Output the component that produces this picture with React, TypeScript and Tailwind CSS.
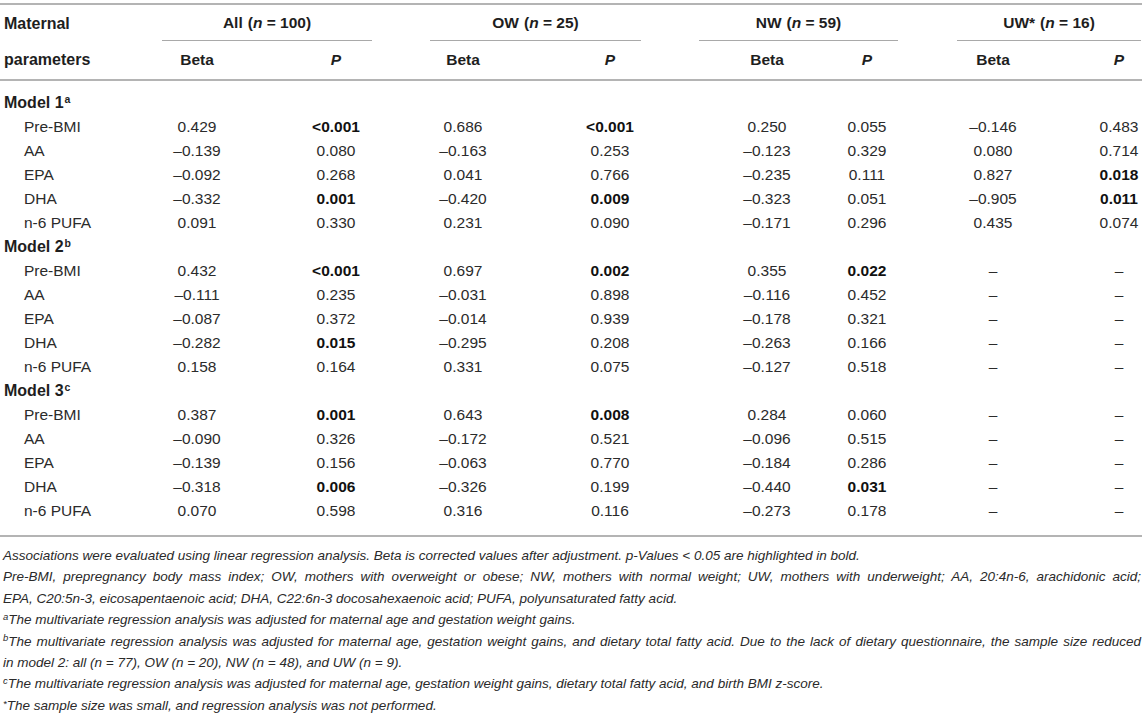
import React from "react";

type Cell = string | { v: string; b: true };
type Row = { label: string; cells: Cell[] } | { model: string; sup: string };

const B = (v: string): Cell => ({ v, b: true });
const D = "–";

const rows: Row[] = [
  { model: "Model 1", sup: "a" },
  { label: "Pre-BMI", cells: ["0.429", B("<0.001"), "0.686", B("<0.001"), "0.250", "0.055", "–0.146", "0.483"] },
  { label: "AA", cells: ["–0.139", "0.080", "–0.163", "0.253", "–0.123", "0.329", "0.080", "0.714"] },
  { label: "EPA", cells: ["–0.092", "0.268", "0.041", "0.766", "–0.235", "0.111", "0.827", B("0.018")] },
  { label: "DHA", cells: ["–0.332", B("0.001"), "–0.420", B("0.009"), "–0.323", "0.051", "–0.905", B("0.011")] },
  { label: "n-6 PUFA", cells: ["0.091", "0.330", "0.231", "0.090", "–0.171", "0.296", "0.435", "0.074"] },
  { model: "Model 2", sup: "b" },
  { label: "Pre-BMI", cells: ["0.432", B("<0.001"), "0.697", B("0.002"), "0.355", B("0.022"), D, D] },
  { label: "AA", cells: ["–0.111", "0.235", "–0.031", "0.898", "–0.116", "0.452", D, D] },
  { label: "EPA", cells: ["–0.087", "0.372", "–0.014", "0.939", "–0.178", "0.321", D, D] },
  { label: "DHA", cells: ["–0.282", B("0.015"), "–0.295", "0.208", "–0.263", "0.166", D, D] },
  { label: "n-6 PUFA", cells: ["0.158", "0.164", "0.331", "0.075", "–0.127", "0.518", D, D] },
  { model: "Model 3", sup: "c" },
  { label: "Pre-BMI", cells: ["0.387", B("0.001"), "0.643", B("0.008"), "0.284", "0.060", D, D] },
  { label: "AA", cells: ["–0.090", "0.326", "–0.172", "0.521", "–0.096", "0.515", D, D] },
  { label: "EPA", cells: ["–0.139", "0.156", "–0.063", "0.770", "–0.184", "0.286", D, D] },
  { label: "DHA", cells: ["–0.318", B("0.006"), "–0.326", "0.199", "–0.440", B("0.031"), D, D] },
  { label: "n-6 PUFA", cells: ["0.070", "0.598", "0.316", "0.116", "–0.273", "0.178", D, D] },
];

const grid =
  "grid grid-cols-[130px_134px_144px_110px_184px_130px_70px_192px_50px] items-center";

// per data column extra classes (UW Beta shifted left a little)
const colCls = ["", "", "", "", "", "", "pr-[10px]", ""];

const groups = [
  { name: "All", n: "100", star: false, cls: "ml-[162px] w-[210px]" },
  { name: "OW", n: "25", star: false, cls: "ml-[58px] w-[211px]" },
  { name: "NW", n: "59", star: false, cls: "ml-[58px] w-[199px]" },
  { name: "UW", n: "16", star: true, cls: "ml-[59px] w-[184px]" },
];

const sup = "text-[9.5px] -top-[0.45em]";

export default function App() {
  return (
    <div
      className="w-[1144px] h-[717px] overflow-hidden bg-white text-[#1e1e1e]"
      style={{ fontFamily: '"Liberation Sans", Arial, Helvetica, sans-serif' }}
    >
      <div className="h-[2px] mt-[3px] mr-[2px] bg-[#b4b4b4]" />
      {/* header row 1 */}
      <div className="flex h-[36px] text-[15.5px] font-bold">
        <div className="w-0 relative">
          <span className="absolute left-[4px] top-[7px] whitespace-nowrap text-[16px]">Maternal</span>
        </div>
        {groups.map((g) => (
          <div key={g.name} className={`${g.cls} flex flex-col`}>
            <div className="flex-1 flex items-center justify-center whitespace-nowrap">
              {g.name}
              {g.star ? <span>*</span> : null}
              <span className="ml-[5px]">
                (<i>n</i> = {g.n})
              </span>
            </div>
            <div className="h-[1.5px] bg-[#a9a9a9]" />
          </div>
        ))}
      </div>
      {/* header row 2 */}
      <div className={`${grid} h-[38px] text-[15.5px] font-bold`}>
        <div className="pl-[4px] text-[16px]">parameters</div>
        {["All", "OW", "NW", "UW"].map((k, gi) => (
          <React.Fragment key={k}>
            <div className={`text-center ${colCls[gi * 2]}`}>Beta</div>
            <div className={`text-center italic ${colCls[gi * 2 + 1]}`}>P</div>
          </React.Fragment>
        ))}
      </div>
      <div className="h-[2px] mr-[2px] bg-[#b4b4b4]" />
      {/* body */}
      <div className="pt-[10px] pb-[12px] text-[15.5px]">
        {rows.map((r, i) =>
          "model" in r ? (
            <div key={i} className="h-[24px] flex items-center pl-[4px] font-bold text-[16px]">
              {r.model}
              <sup className="text-[10.5px] font-semibold ml-[1px] -top-[0.4em]">{r.sup}</sup>
            </div>
          ) : (
            <div key={i} className={`${grid} h-[24px] text-[#2b2b2b]`}>
              <div className="pl-[24px] whitespace-nowrap">{r.label}</div>
              {r.cells.map((c, j) =>
                typeof c === "string" ? (
                  <div key={j} className={`text-center whitespace-nowrap ${colCls[j]}`}>
                    {c}
                  </div>
                ) : (
                  <div key={j} className={`text-center font-bold text-[#111] whitespace-nowrap ${colCls[j]}`}>
                    {c.v}
                  </div>
                )
              )}
            </div>
          )
        )}
      </div>
      <div className="h-[2px] mr-[2px] bg-[#b4b4b4]" />
      {/* footnotes */}
      <div className="pt-[8px] pl-[3px] pr-[3px] text-[13.5px] leading-[21.4px] italic text-[#2a2a2a]">
        <div className="whitespace-nowrap">
          Associations were evaluated using linear regression analysis. Beta is corrected values after
          adjustment. p-Values &lt; 0.05 are highlighted in bold.
        </div>
        <div className="whitespace-nowrap text-justify [text-align-last:justify]">
          Pre-BMI, prepregnancy body mass index; OW, mothers with overweight or obese; NW, mothers with
          normal weight; UW, mothers with underweight; AA, 20:4n-6, arachidonic acid;
        </div>
        <div className="whitespace-nowrap">
          EPA, C20:5n-3, eicosapentaenoic acid; DHA, C22:6n-3 docosahexaenoic acid; PUFA,
          polyunsaturated fatty acid.
        </div>
        <div className="whitespace-nowrap">
          <sup className={sup}>a</sup>The multivariate regression analysis was adjusted for maternal age
          and gestation weight gains.
        </div>
        <div className="whitespace-nowrap text-justify [text-align-last:justify]">
          <sup className={sup}>b</sup>The multivariate regression analysis was adjusted for maternal age,
          gestation weight gains, and dietary total fatty acid. Due to the lack of dietary questionnaire,
          the sample size reduced
        </div>
        <div className="whitespace-nowrap">
          in model 2: all (n = 77), OW (n = 20), NW (n = 48), and UW (n = 9).
        </div>
        <div className="whitespace-nowrap">
          <sup className={sup}>c</sup>The multivariate regression analysis was adjusted for maternal age,
          gestation weight gains, dietary total fatty acid, and birth BMI z-score.
        </div>
        <div className="whitespace-nowrap">
          <sup className="text-[9.5px] -top-[0.35em]">*</sup>The sample size was small, and regression
          analysis was not performed.
        </div>
      </div>
    </div>
  );
}
